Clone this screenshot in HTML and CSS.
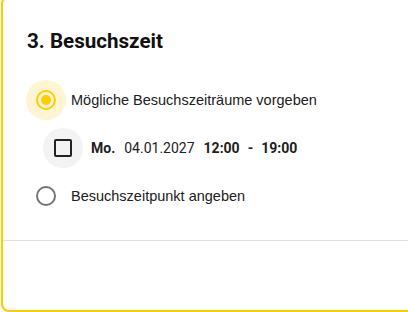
FILE: index.html
```html
<!DOCTYPE html>
<html lang="de">
<head>
<meta charset="utf-8">
<link rel="stylesheet" href="styles.css">
</head>
<body>
<div class="card">
  <h2 class="title">3. Besuchszeit</h2>
  <div class="options">
    <div class="row">
      <span class="halo halo-yellow"><span class="radio radio-on"><span class="dot"></span></span></span>
      <span class="label">Mögliche Besuchszeiträume vorgeben</span>
    </div>
    <div class="row row-sub">
      <span class="halo halo-grey"><span class="check"></span></span>
      <span class="slot">
        <span class="day">Mo.</span>
        <span class="date">04.01.2027</span>
        <span class="time">12:00</span>
        <span class="dash">-</span>
        <span class="time">19:00</span>
      </span>
    </div>
    <div class="row">
      <span class="halo"><span class="radio radio-off"></span></span>
      <span class="label">Besuchszeitpunkt angeben</span>
    </div>
  </div>
  <div class="divider"></div>
</div>
</body>
</html>
```

FILE: styles.css
```css
html, body {
  margin: 0;
  padding: 0;
  background: #ffffff;
  overflow: hidden;
  width: 408px;
  height: 312px;
}

.card {
  box-sizing: border-box;
  margin: -4px 0 0 1px;
  width: 470px;
  height: 316px;
  border: 2px solid #ffcc00;
  border-radius: 8px;
  background: #fff;
}

.title {
  margin: 0;
  padding: 29px 0 0 24px;
  font-family: Roboto, "Liberation Sans", sans-serif;
  font-weight: 700;
  font-size: 20.6px;
  line-height: 28px;
  color: #111111;
}

.options {
  display: flex;
  flex-direction: column;
  gap: 8px;
  padding: 25px 0 24px 23px;
}

.row {
  display: flex;
  align-items: center;
  gap: 5px;
}

.row-sub {
  padding-left: 17px;
  gap: 8px;
}

.halo {
  width: 40px;
  height: 40px;
  border-radius: 50%;
  display: flex;
  align-items: center;
  justify-content: center;
  flex: none;
}

.halo-yellow { background: #fff5d3; }
.halo-grey { background: #f3f3f3; }

.radio {
  box-sizing: border-box;
  width: 20px;
  height: 20px;
  border-radius: 50%;
  border: 2px solid #757575;
  display: flex;
  align-items: center;
  justify-content: center;
}

.radio-on { border-color: #ffcc00; }

.dot {
  width: 10px;
  height: 10px;
  border-radius: 50%;
  background: #ffcc00;
}

.check {
  box-sizing: border-box;
  width: 18px;
  height: 18px;
  border: 2px solid #222222;
  border-radius: 2px;
}

.label {
  font-family: "Liberation Sans", Arial, sans-serif;
  font-size: 14.5px;
  color: #212121;
}

.slot {
  display: flex;
  align-items: baseline;
  font-family: Roboto, "Liberation Sans", sans-serif;
  font-size: 14px;
  color: #212121;
}

.day { font-weight: 700; margin-right: 9px; }
.date { margin-right: 9px; }
.time { font-weight: 700; }
.dash { font-weight: 700; margin: 0 8px; }

.divider {
  height: 1px;
  background: #e0e0e0;
}
```
